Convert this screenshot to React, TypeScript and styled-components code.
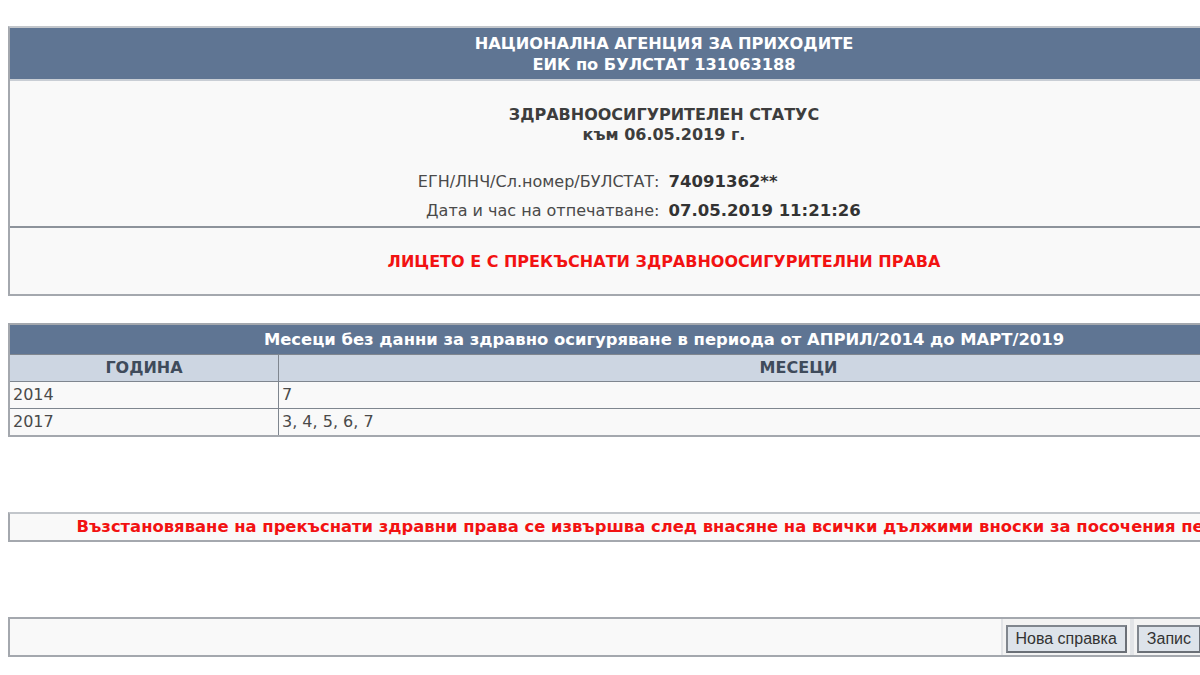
import React from "react";
import styled, { createGlobalStyle } from "styled-components";

const GlobalStyle = createGlobalStyle`
  html, body {
    margin: 0;
    background: #ffffff;
    overflow: hidden;
  }
  body {
    padding: 26px 0 0 8px;
    font-family: "DejaVu Sans", Verdana, sans-serif;
    font-size: 16px;
    color: #444;
  }
`;

const Page = styled.div`
  width: 1312px;
  display: flex;
  flex-direction: column;
`;

const Box = styled.section<{ $mt?: number }>`
  margin-top: ${(p) => p.$mt ?? 0}px;
  border: 2px solid #a4a8ae;
  border-top-color: #c2c6cb;
  background: #f9f9f9;
`;

const HeadBar = styled.header`
  background: #5f7593;
  color: #fff;
  font-weight: bold;
  font-size: 16.2px;
  line-height: 21px;
  text-align: center;
  padding: 5px 0 4px;
  border-bottom: 2px solid #c9ced5;
`;

const StatusPart = styled.div`
  padding: 24px 0 5px;
  border-bottom: 2px solid #8d939b;
`;

const Title = styled.div`
  text-align: center;
  font-weight: bold;
  color: #3d3d3d;
  line-height: 20px;
`;

const Fields = styled.div`
  display: grid;
  grid-template-columns: 1fr 1fr;
  column-gap: 9px;
  row-gap: 9px;
  margin-top: 27px;
  line-height: 20px;
`;

const Label = styled.span`
  text-align: right;
  color: #4a4a4a;
`;

const Value = styled.span`
  font-weight: bold;
  font-size: 16.5px;
  color: #333;
`;

const Alert = styled.div<{ $pt: number; $pb: number; $size?: number }>`
  color: #f21212;
  font-weight: bold;
  font-size: ${(p) => p.$size ?? 16}px;
  text-align: center;
  white-space: nowrap;
  padding: ${(p) => p.$pt}px 0 ${(p) => p.$pb}px;
  line-height: 20px;
`;

const Table = styled.table`
  margin-top: 27px;
  width: 1312px;
  border-collapse: collapse;
  border: 2px solid #a4a8ae;
  line-height: 20px;
  td, th {
    border: 1px solid #7f868f;
  }
`;

const Caption = styled.th`
  background: #5f7593;
  color: #fff;
  font-weight: bold;
  font-size: 16.4px;
  height: 29px;
  padding: 0;
`;

const ColHead = styled.th`
  background: #cdd6e2;
  color: #3f4b5b;
  font-weight: bold;
  height: 26px;
  padding: 0;
`;

const Cell = styled.td<{ $w?: number }>`
  background: #f9f9f9;
  color: #4a4a4a;
  text-align: left;
  height: 26px;
  padding: 0 3px;
  width: ${(p) => (p.$w ? `${p.$w}px` : "auto")};
`;

const ActionBar = styled.div`
  margin-top: 75px;
  border: 2px solid #a4a8ae;
  background: #f9f9f9;
  height: 36px;
  display: flex;
  justify-content: flex-end;
  align-items: stretch;
  padding-right: 112px;
`;

const ButtonSlot = styled.div`
  display: flex;
  align-items: center;
  padding: 3px 3px 0;
  border-left: 2px solid #e2e4e7;
  border-right: 2px solid #e2e4e7;
  background: #f3f3f3;
`;

const Button = styled.button`
  font-family: "Liberation Sans", Arial, sans-serif;
  font-size: 16px;
  color: #333;
  background: #dde3ea;
  border: 2px solid #80868e;
  border-right-color: #6b7077;
  border-bottom-color: #6b7077;
  height: 28px;
  padding: 0 8px;
`;

export default function App() {
  const rows = [
    { year: "2014", months: "7" },
    { year: "2017", months: "3, 4, 5, 6, 7" },
  ];

  return (
    <Page>
      <GlobalStyle />
      <Box>
        <HeadBar>
          НАЦИОНАЛНА АГЕНЦИЯ ЗА ПРИХОДИТЕ
          <br />
          ЕИК по БУЛСТАТ 131063188
        </HeadBar>
        <StatusPart>
          <Title>
            ЗДРАВНООСИГУРИТЕЛЕН СТАТУС
            <br />
            към 06.05.2019 г.
          </Title>
          <Fields>
            <Label>ЕГН/ЛНЧ/Сл.номер/БУЛСТАТ:</Label>
            <Value>74091362**</Value>
            <Label>Дата и час на отпечатване:</Label>
            <Value>07.05.2019 11:21:26</Value>
          </Fields>
        </StatusPart>
        <Alert $pt={24} $pb={22}>
          ЛИЦЕТО Е С ПРЕКЪСНАТИ ЗДРАВНООСИГУРИТЕЛНИ ПРАВА
        </Alert>
      </Box>

      <Table>
        <thead>
          <tr>
            <Caption colSpan={2}>
              Месеци без данни за здравно осигуряване в периода от АПРИЛ/2014 до МАРТ/2019
            </Caption>
          </tr>
          <tr>
            <ColHead>ГОДИНА</ColHead>
            <ColHead>МЕСЕЦИ</ColHead>
          </tr>
        </thead>
        <tbody>
          {rows.map((r) => (
            <tr key={r.year}>
              <Cell $w={262}>{r.year}</Cell>
              <Cell>{r.months}</Cell>
            </tr>
          ))}
        </tbody>
      </Table>

      <Box $mt={75}>
        <Alert $pt={3} $pb={3} $size={16.4}>
          Възстановяване на прекъснати здравни права се извършва след внасяне на всички дължими вноски за посочения период
        </Alert>
      </Box>

      <ActionBar>
        <ButtonSlot>
          <Button>Нова справка</Button>
        </ButtonSlot>
        <ButtonSlot>
          <Button>Запис</Button>
        </ButtonSlot>
      </ActionBar>
    </Page>
  );
}
